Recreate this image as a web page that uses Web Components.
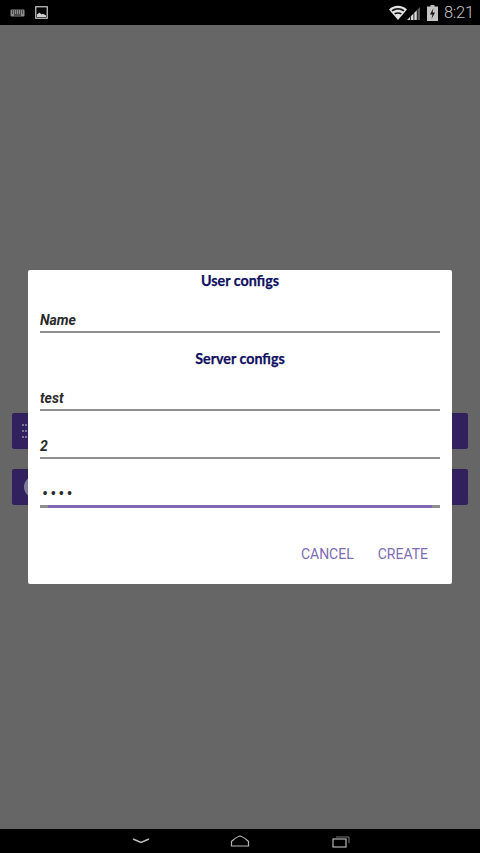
<!DOCTYPE html>
<html><head><meta charset="utf-8">
<style>
html,body{margin:0;padding:0;height:100%;background:#666;overflow:hidden}
app-screen{height:853px}
</style></head>
<body>
<app-screen>
  <status-bar slot="top"></status-bar>
  <back-card slot="main" kind="list"></back-card>
  <back-card slot="main" kind="round"></back-card>
  <config-dialog slot="overlay">
    <section-title>User configs</section-title>
    <text-line style="--top:20px">Name</text-line>
    <section-title style="--top:16px">Server configs</section-title>
    <text-line style="--top:20px">test</text-line>
    <text-line style="--top:25px">2</text-line>
    <text-line style="--top:26px" active password>••••</text-line>
    <dialog-button slot="actions">CANCEL</dialog-button>
    <dialog-button slot="actions">CREATE</dialog-button>
  </config-dialog>
  <nav-bar slot="bottom"></nav-bar>
</app-screen>
<script>
function def(name, html, cls){
  customElements.define(name, class extends HTMLElement{
    constructor(){super();this.attachShadow({mode:'open'}).innerHTML=html;}
    connectedCallback(){cls&&cls.call(this);}
  });
}
def('app-screen',`<style>
:host{display:grid;grid-template-rows:25px 1fr 24px;width:480px;position:relative;background:#666}
.main{display:flex;flex-direction:column;gap:20px;padding:388px 12px 0}
.over{position:absolute;left:28px;top:270px}
</style><slot name="top"></slot><div class="main"><slot name="main"></slot></div><slot name="bottom"></slot><div class="over"><slot name="overlay"></slot></div>`);

def('status-bar',`<style>
:host{display:flex;align-items:center;background:#000;color:#c4c4c4;height:25px;font:300 16.500px Roboto,sans-serif}
svg{display:block}
.l{display:flex;align-items:center;gap:10px;padding-left:10px;flex:1}
.r{display:flex;align-items:center;padding-right:6px}
.t{margin-left:6px;letter-spacing:-.2px;line-height:25px}
</style>
<div class="l">
<svg width="15" height="8" viewBox="0 0 15 8"><rect x=".5" y=".5" width="14" height="7" rx="1" fill="#8a8a8a"/><path d="M2 2h1M4 2h1M6 2h1M8 2h1M10 2h1M12 2h1M2 4h1M4 4h1M6 4h1M8 4h1M10 4h1M12 4h1M4 6h7" stroke="#111" stroke-width="1"/></svg>
<svg width="13" height="13" viewBox="0 0 13 13"><rect x=".75" y=".75" width="11.500" height="11.500" fill="#000" stroke="#bdbdbd" stroke-width="1.300"/><path d="M2 11V8.500L4.500 6.500 6.500 8.500 8 7.800 11 9.500V11Z" fill="#d0d0d0"/></svg>
</div>
<div class="r">
<svg width="18" height="15" viewBox="0 0 18 15"><path d="M9 15 0 4.500C5-.5 13-.5 18 4.500Z" fill="#e2e2e2"/><path d="M2.600 5.300C6 2.300 12 2.300 15.400 5.300L14.400 6.500C11.200 4 6.800 4 3.600 6.500ZM5.200 8.300C7.300 6.800 10.700 6.800 12.800 8.300L11.800 9.500C10.300 8.500 7.700 8.500 6.200 9.500Z" fill="#111"/></svg>
<svg width="13" height="15" viewBox="0 0 13 15"><path d="M0 15 3 12V15ZM3.800 15V11.200L6.500 8.500V15ZM7.300 15V7.700L9.800 5.200V15Z" fill="#d8d8d8"/><path d="M10.500 15V4.500L13 2V15Z" fill="#5a5a5a"/></svg>
<svg width="11" height="16" viewBox="0 0 11 16" style="margin-left:7px"><rect x="3.500" y="0" width="4" height="2" fill="#bbb"/><rect x="0" y="1.500" width="11" height="14.500" fill="#c4c4c4"/><path d="M6.500 3 3 9.500H5.500L4.500 14 8 7.500H5.500Z" fill="#111"/></svg>
<span class="t">8:21</span>
</div>`);

def('back-card',`<style>
:host{display:flex;align-items:center;height:36px;background:#32215f;border-radius:2px;padding-left:10px;box-sizing:border-box}
svg{display:block}
</style><span id="i"></span>`,function(){
  const k=this.getAttribute('kind');
  this.shadowRoot.getElementById('i').innerHTML = k==='list'
   ? '<svg width="6" height="16" viewBox="0 0 6 16"><path d="M0 2h6M0 8h6M0 14h6" stroke="#7c7598" stroke-width="2" stroke-dasharray="2 1"/></svg>'
   : '<svg width="6" height="24" viewBox="0 0 6 24" style="display:block"><circle cx="13" cy="12" r="11" fill="#7f7a97"/></svg>';
});

def('config-dialog',`<style>
:host{display:block;width:424px;height:314px;background:#fff;border-radius:2px;box-sizing:border-box;padding:1px 12px 0;position:relative}
.actions{position:absolute;right:16px;bottom:12px;display:flex;gap:8px}
</style><slot></slot><div class="actions"><slot name="actions"></slot></div>`);

def('section-title',`<style>
:host{display:block;margin-top:var(--top,0);text-align:center;font:700 14.300px/19px Lato,sans-serif;color:#10105f;-webkit-text-stroke:.25px #10105f}
</style><slot></slot>`);

def('text-line',`<style>
:host{display:block;margin-top:var(--top,0);font:italic 700 14px/21px Roboto,sans-serif;color:#2a2a2a}
.text{height:21px}
.rule{display:flex;height:2px;background:#8f8f8f}
:host([active]) .text{height:20px}
:host([active]) .rule{height:3px;background:linear-gradient(#8f8f8f,#8f8f8f) left/8px 100% no-repeat,linear-gradient(#8f8f8f,#8f8f8f) right/8px 100% no-repeat}
:host([active]) .rule b{display:block;flex:1;height:3px;margin:0 8px;background:#7e69b2}
:host([password]) .text{letter-spacing:2.600px;font-size:16px;line-height:17px;padding-left:2px}
</style><div class="text"><slot></slot></div><div class="rule"><b></b></div>`);

def('dialog-button',`<style>
:host{display:block;padding:8px 8px;font:400 14px/20px Roboto,sans-serif;color:#7d6bb0}
</style><slot></slot>`);

def('nav-bar',`<style>
:host{display:flex;align-items:center;background:#000;height:24px;padding-left:132px;box-sizing:border-box}
svg{display:block}
</style>
<svg width="18" height="6" viewBox="0 0 18 6"><path d="M1 1 9 4.500 17 1" fill="none" stroke="#bdbdbd" stroke-width="1.500"/></svg>
<svg width="20" height="12" viewBox="0 0 20 12" style="margin-left:80px"><path d="M1.500 11V6.500C5 3.500 7 1.500 10 1c3 .5 5 2.500 8.500 5.500V11Z" fill="none" stroke="#b5b5b5" stroke-width="1.200"/></svg>
<svg width="18" height="13" viewBox="0 0 18 13" style="margin-left:82px"><rect x="1" y="4" width="13" height="8" fill="none" stroke="#b5b5b5" stroke-width="1.200"/><path d="M4 2H17V8" fill="none" stroke="#777" stroke-width="1"/></svg>`);
</script>
</body></html>
